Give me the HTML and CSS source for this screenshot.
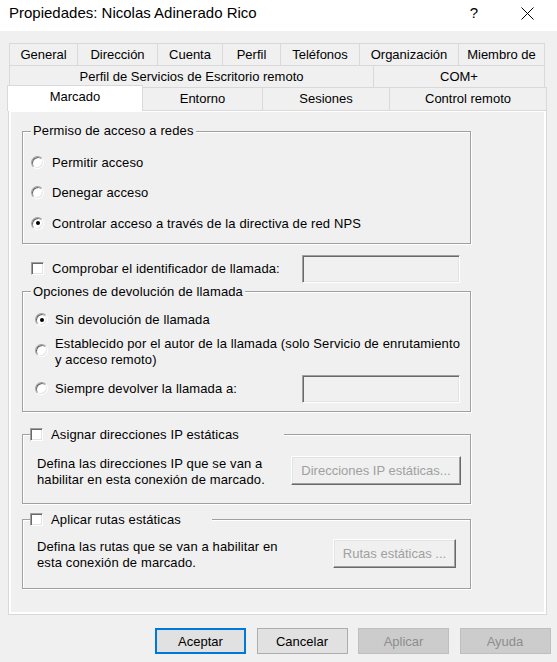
FILE: index.html
```html
<!DOCTYPE html>
<html lang="es">
<head>
<meta charset="utf-8">
<title>Propiedades: Nicolas Adinerado Rico</title>
<link rel="stylesheet" href="styles.css">
</head>
<body>
<div class="window">
  <header class="titlebar">
    <span class="title">Propiedades: Nicolas Adinerado Rico</span>
    <span class="help">?</span>
    <svg class="close" width="13" height="13" viewBox="0 0 13 13"><path d="M0.5 0.5L12.5 12.5M12.5 0.5L0.5 12.5" stroke="#000" stroke-width="1" fill="none"/></svg>
  </header>
  <div class="dialog">
    <div class="tabs">
      <div class="tabrow">
        <div class="tab t-general">General</div>
        <div class="tab t-direccion">Dirección</div>
        <div class="tab t-cuenta">Cuenta</div>
        <div class="tab t-perfil">Perfil</div>
        <div class="tab t-telefonos">Teléfonos</div>
        <div class="tab t-org">Organización</div>
        <div class="tab t-miembro last">Miembro de</div>
      </div>
      <div class="tabrow">
        <div class="tab t-escritorio">Perfil de Servicios de Escritorio remoto</div>
        <div class="tab t-com last">COM+</div>
      </div>
      <div class="tabrow row3">
        <div class="tab sel t-marcado">Marcado</div>
        <div class="tab noleft t-entorno">Entorno</div>
        <div class="tab t-sesiones">Sesiones</div>
        <div class="tab t-control last">Control remoto</div>
      </div>
    </div>
    <div class="panel">
      <div class="page">
        <fieldset class="group g1">
          <legend class="legend">Permiso de acceso a redes</legend>
          <div class="opt"><span class="radio"></span><span>Permitir acceso</span></div>
          <div class="opt"><span class="radio"></span><span>Denegar acceso</span></div>
          <div class="opt"><span class="radio checked"></span><span>Controlar acceso a través de la directiva de red NPS</span></div>
        </fieldset>

        <div class="checkrow">
          <span class="check"></span>
          <span class="lbl">Comprobar el identificador de llamada:</span>
          <span class="field"></span>
        </div>

        <fieldset class="group g2">
          <legend class="legend">Opciones de devolución de llamada</legend>
          <div class="opt2"><span class="radio checked"></span><span>Sin devolución de llamada</span></div>
          <div class="opt2 tall"><span class="radio"></span><span class="multi">Establecido por el autor de la llamada (solo Servicio de enrutamiento<br>y acceso remoto)</span></div>
          <div class="opt2 withfield"><span class="radio"></span><span>Siempre devolver la llamada a:</span><span class="field"></span></div>
        </fieldset>

        <fieldset class="group g3">
          <legend class="legend chk l3"><span class="check"></span><span>Asignar direcciones IP estáticas</span></legend>
          <div class="grouprow r3">
            <p class="desc">Defina las direcciones IP que se van a<br>habilitar en esta conexión de marcado.</p>
            <span class="btn3d b-ip">Direcciones IP estáticas...</span>
          </div>
        </fieldset>

        <fieldset class="group g4">
          <legend class="legend chk l4"><span class="check"></span><span>Aplicar rutas estáticas</span></legend>
          <div class="grouprow r4">
            <p class="desc">Defina las rutas que se van a habilitar en<br>esta conexión de marcado.</p>
            <span class="btn3d b-rutas">Rutas estáticas ...</span>
          </div>
        </fieldset>
      </div>
    </div>
    <div class="buttons">
      <span class="btn default">Aceptar</span>
      <span class="btn">Cancelar</span>
      <span class="btn disabled">Aplicar</span>
      <span class="btn disabled">Ayuda</span>
    </div>
  </div>
</div>
</body>
</html>
```

FILE: styles.css
```css
* { box-sizing: border-box; }
html, body { margin: 0; padding: 0; }
body {
  width: 557px;
  height: 662px;
  overflow: hidden;
  background: #f0f0f0;
  font-family: "Liberation Sans", Arial, sans-serif;
  font-size: 13px;
  color: #000;
}

/* title bar */
.titlebar {
  height: 31px;
  background: #fff;
  display: flex;
  align-items: flex-start;
  padding: 4px 0 0 9px;
}
.title { flex: 1; font-size: 15px; line-height: 17px; }
.help { font-size: 15px; line-height: 17px; margin-right: 43px; }
.close { margin: 3px 23px 0 0; }

/* dialog */
.dialog { padding-top: 12px; }

.tabrow { display: flex; margin-left: 9px; }
.tab {
  height: 22px;
  line-height: 21px;
  border-top: 1px solid #d9d9d9;
  border-left: 1px solid #d9d9d9;
  text-align: center;
  white-space: nowrap;
  background: #f0f0f0;
}
.tab.last { border-right: 1px solid #d9d9d9; }
.row3 { margin-left: 7px; height: 23px; }
.row3 .tab { height: 23px; line-height: 22px; }
.row3 .tab.sel {
  height: 26px;
  margin-top: -2px;
  line-height: 21px;
  background: #fff;
  border-right: 1px solid #d9d9d9;
  position: relative;
  z-index: 1;
}
.tab.noleft { border-left: none; }

.t-general { width: 68px; }
.t-direccion { width: 80px; }
.t-cuenta { width: 65px; }
.t-perfil { width: 58px; }
.t-telefonos { width: 79px; }
.t-org { width: 99px; }
.t-miembro { width: 87px; }
.t-escritorio { width: 364px; }
.t-com { width: 172px; }
.t-marcado { width: 136px; }
.t-entorno { width: 119px; }
.t-sesiones { width: 127px; }
.t-control { width: 158px; }

.panel {
  margin-left: 8px;
  width: 539px;
  height: 505px;
  border: 1px solid #d9d9d9;
  background: #fff;
  padding: 1px 2px 2px 2px;
}
.page {
  height: 500px;
  background: #f0f0f0;
  padding: 11px 0 0 11px;
  letter-spacing: 0.12px;
}

/* group boxes */
.group {
  margin: 0;
  padding: 0;
  width: 449px;
  min-width: 0;
  border: 1px solid #a0a0a0;
  box-shadow: inset 1px 1px 0 #fff, 1px 1px 0 #fff;
}
.legend {
  margin-left: 8px;
  padding: 0 2px;
  line-height: 16px;
  background: #f0f0f0;
}
.legend.chk {
  margin-left: 7px;
  padding: 0;
  display: flex;
  align-items: center;
}
.legend.chk .check { margin-right: 8px; }
.l3 { width: 254px; }
.l4 { width: 182px; }

.g1 { padding: 8px 0 4px 0; }
.opt {
  display: flex;
  align-items: center;
  height: 30.5px;
  padding-left: 8px;
}
.opt .radio { margin-right: 8px; }

.radio {
  width: 13px;
  height: 13px;
  flex: none;
  border-radius: 50%;
  background: #fff;
  border: 1px solid;
  border-color: #a0a0a0 #ffffff #ffffff #a0a0a0;
  box-shadow: inset 1px 1px 0 #696969, inset -1px -1px 0 #e3e3e3;
  position: relative;
}
.radio.checked::after {
  content: "";
  position: absolute;
  left: 3.5px;
  top: 3.5px;
  width: 4px;
  height: 4px;
  border-radius: 50%;
  background: #000;
}

.check {
  width: 13px;
  height: 13px;
  flex: none;
  display: inline-block;
  background: #fff;
  border: 1px solid;
  border-color: #a0a0a0 #ffffff #ffffff #a0a0a0;
  box-shadow: inset 1px 1px 0 #696969, inset -1px -1px 0 #e3e3e3;
}

.field {
  width: 158px;
  height: 28px;
  flex: none;
  background: #f0f0f0;
  border: 1px solid;
  border-color: #a0a0a0 #ffffff #ffffff #a0a0a0;
  box-shadow: inset 1px 1px 0 #696969, inset -1px -1px 0 #e3e3e3;
}

.checkrow {
  display: flex;
  align-items: center;
  height: 28px;
  margin-top: 11px;
  padding-left: 9px;
}
.checkrow .check { margin-right: 8px; }
.checkrow .field { margin-left: auto; margin-right: 84px; }

.g2 { margin-top: 1px; padding: 5px 0 8px 0; }
.opt2 {
  display: flex;
  align-items: center;
  height: 30px;
  padding-left: 12px;
}
.opt2 .radio { margin-right: 7px; }
.opt2.tall { height: 34px; }
.opt2.tall .radio { margin-top: -3px; }
.multi { line-height: 16px; }
.opt2.withfield { height: 28px; margin-top: 6px; }
.opt2.withfield .field { margin-left: auto; margin-right: 10px; }

.g3 { margin-top: 15px; }
.g4 { margin-top: 8px; }
.grouprow {
  display: flex;
  justify-content: space-between;
  align-items: flex-start;
}
.r3 { padding: 13px 9px 15px 14px; }
.r4 { padding: 11px 14px 17px 14px; }
.desc { margin: 0; line-height: 16px; }

.btn3d {
  height: 29px;
  display: flex;
  align-items: center;
  justify-content: center;
  background: #f0f0f0;
  color: #a0a0a0;
  letter-spacing: 0;
  border: 1px solid;
  border-color: #ffffff #696969 #696969 #ffffff;
  box-shadow: inset -1px -1px 0 #a0a0a0, inset 1px 1px 0 #e3e3e3;
  white-space: nowrap;
}
.b-ip { width: 170px; }
.b-rutas { width: 123px; }

/* bottom buttons */
.buttons {
  display: flex;
  gap: 10.5px;
  margin-top: 13px;
  padding-left: 155px;
}
.btn {
  width: 91px;
  height: 26px;
  display: flex;
  align-items: center;
  justify-content: center;
  background: #e1e1e1;
  border: 1px solid #adadad;
}
.btn.default {
  border-color: #0078d7;
  box-shadow: inset 0 0 0 1px #0078d7;
}
.btn.disabled {
  background: #cccccc;
  border-color: #bfbfbf;
  color: #8d8d8d;
}
```
